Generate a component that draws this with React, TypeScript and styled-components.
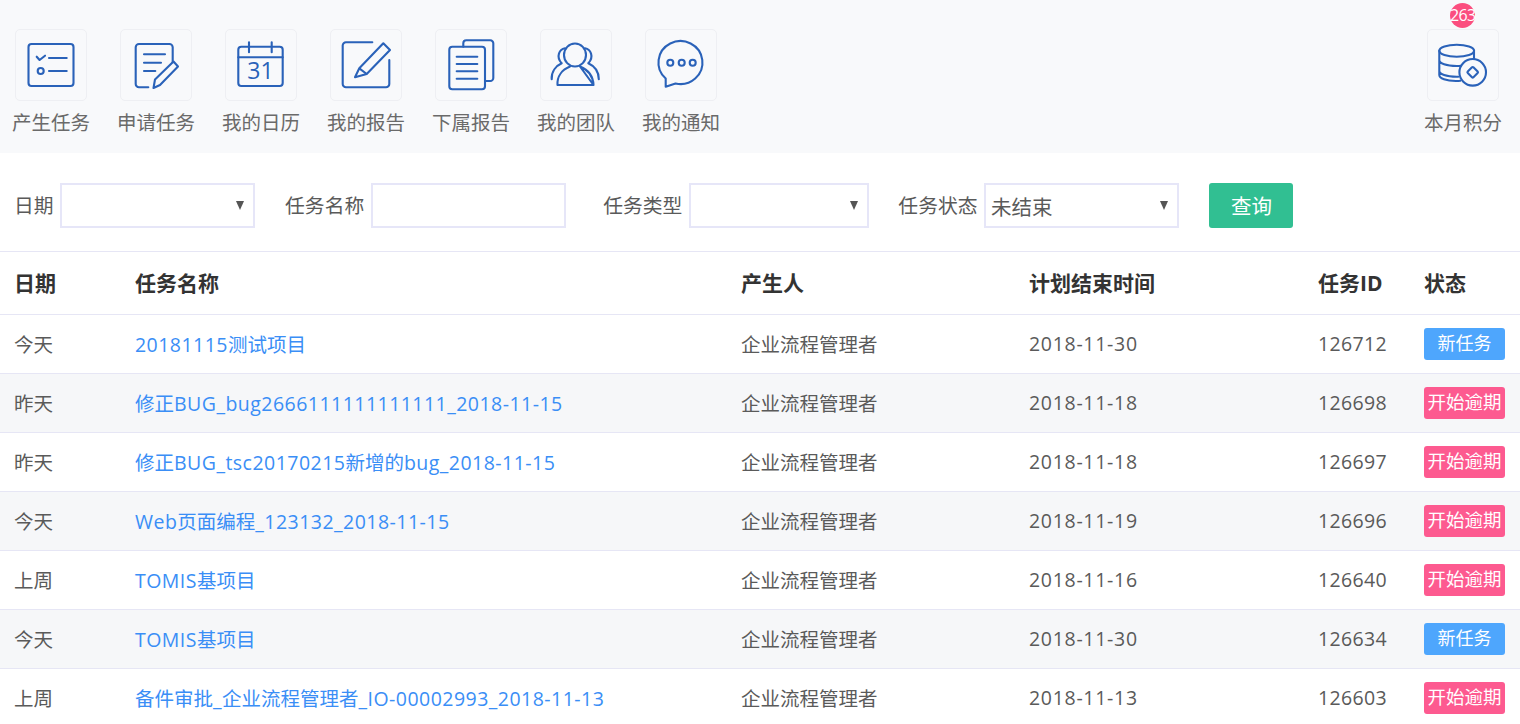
import React from "react";
import styled, { createGlobalStyle } from "styled-components";

const Global = createGlobalStyle`
  html, body { margin: 0; padding: 0; height: 100%; overflow: hidden; background: #fff; }
  body { font-family: "Open Sans", "Noto Sans CJK SC", sans-serif; font-size: 19.5px; color: #555; }
`;

const Page = styled.div`
  width: 1520px;
`;
const TopBar = styled.header`
  display: flex;
  justify-content: space-between;
  height: 153px;
  box-sizing: border-box;
  padding: 29px 18px 0 12px;
  background: #f8f9fb;
`;
const Shortcuts = styled.nav`
  display: flex;
  gap: 27px;
`;
const Shortcut = styled.a`
  position: relative;
  display: flex;
  flex-direction: column;
  align-items: center;
  width: 78px;
`;
const Tile = styled.div`
  width: 72px;
  height: 72px;
  box-sizing: border-box;
  border: 1px solid #eeeff3;
  border-radius: 5px;
  margin-bottom: 7px;
`;
const IconSvg = styled.svg`
  display: block;
  width: 72px;
  height: 72px;
  margin: -1px;
  fill: none;
  stroke: #2a62b9;
  stroke-width: 2.1;
  stroke-linecap: round;
  stroke-linejoin: round;
`;
const CalText = styled.text`
  font-family: "Open Sans", sans-serif;
  font-size: 23px;
  fill: #2a62b9;
  stroke: none;
`;
const TileLabel = styled.span`
  font-size: 19.5px;
  line-height: 30px;
  color: #6a6a6a;
  white-space: nowrap;
`;
const Badge = styled.span`
  position: absolute;
  top: -26px;
  left: 26px;
  width: 25px;
  height: 25px;
  border-radius: 50%;
  background: #fb4e7f;
  color: #fff;
  font-size: 16px;
  letter-spacing: -0.6px;
  line-height: 25px;
  text-align: center;
`;

const Filters = styled.form`
  display: flex;
  align-items: center;
  height: 99px;
  box-sizing: border-box;
  padding: 7.5px 0 0 14px;
  border-bottom: 1.5px solid #e6e6f5;
  margin: 0;
  font-size: 19.8px;
`;
const FilterLabel = styled.label<{ $ml?: number }>`
  margin-left: ${(p) => p.$ml ?? 0}px;
  margin-right: 6.5px;
  padding-bottom: 2px;
  color: #5a5a5a;
  white-space: nowrap;
`;
const SelectWrap = styled.div<{ $w: number }>`
  position: relative;
  width: ${(p) => p.$w}px;
  height: 45px;
  &::after {
    content: "";
    position: absolute;
    right: 11px;
    top: 18px;
    border-left: 4.5px solid transparent;
    border-right: 4.5px solid transparent;
    border-top: 9px solid #555;
    pointer-events: none;
  }
`;
const Select = styled.select`
  appearance: none;
  width: 100%;
  height: 100%;
  box-sizing: border-box;
  border: 2px solid #e6e6f8;
  border-radius: 0;
  background: #fff;
  padding: 2px 0 0 5px;
  font: inherit;
  font-size: 20.5px;
  color: #5a5a5a;
  outline: none;
`;
const TextInput = styled.input`
  width: 195px;
  height: 45px;
  box-sizing: border-box;
  border: 2px solid #e6e6f8;
  background: #fff;
  outline: none;
  font: inherit;
`;
const QueryButton = styled.button`
  width: 84px;
  height: 45px;
  margin-left: 30px;
  padding: 0 0 2px 1px;
  border: 0;
  border-radius: 3px;
  background: #31bf92;
  color: #fff;
  font: inherit;
  font-size: 20.5px;
`;

const Table = styled.table`
  width: 1520px;
  table-layout: fixed;
  border-collapse: collapse;
`;
const Head = styled.th`
  height: 62px;
  padding: 0 0 2px;
  box-sizing: border-box;
  text-align: left;
  font-size: 21px;
  font-weight: 700;
  color: #333;
  border-bottom: 1.5px solid #e6e6f5;
  &:first-child { padding-left: 14px; }
`;
const Row = styled.tr`
  height: 59px;
  border-bottom: 1.5px solid #e6e6f5;
  &:nth-child(even) { background: #f6f7f9; }
`;
const Cell = styled.td<{ $spacing?: number }>`
  padding: 0;
  color: #5a5a5a;
  white-space: nowrap;
  letter-spacing: ${(p) => p.$spacing ?? 0}px;
  &:first-child { padding-left: 14px; }
`;
const TaskLink = styled.a`
  color: #3a8ef6;
  text-decoration: none;
`;
const LatinRun = styled.span`
  letter-spacing: 0.47px;
`;
const Status = styled.span<{ $kind: "new" | "late" }>`
  display: block;
  width: 81px;
  height: 32px;
  border-radius: 3px;
  background: ${(p) => (p.$kind === "new" ? "#4ea6fd" : "#fd5a90")};
  color: #fff;
  font-size: ${(p) => (p.$kind === "new" ? "18px" : "18.5px")};
  line-height: 30px;
  text-align: center;
`;

const icons: React.ReactNode[] = [
  <>
    <rect x="13.5" y="15" width="45" height="42" rx="3" />
    <path d="M21.7 27.7l2.9 3.3 5.4-4.3M34 29h17.7M34 42h17.7" />
    <circle cx="25.7" cy="42" r="3" />
  </>,
  <>
    <path d="M28.3 58.3H19a3.3 3.3 0 0 1-3.3-3.3V18.3A3.3 3.3 0 0 1 19 15h30.4a3.3 3.3 0 0 1 3.3 3.3v15M24 25.3h21M24 33.7h17M24 42h11.3" />
    <path d="M33.5 59l1.5-8.5L53.5 32.5l4.5 5L40 56z" />
  </>,
  <>
    <rect x="13.3" y="17.7" width="44.4" height="39.3" rx="3" />
    <path d="M13.3 28.3h44.4M24 13.3v10M46.7 13.3v10" />
    <CalText x="35.5" y="50" textAnchor="middle">31</CalText>
  </>,
  <>
    <path d="M42.3 13.3H16a3.3 3.3 0 0 0-3.3 3.3V55a3.3 3.3 0 0 0 3.3 3.3h40a3.3 3.3 0 0 0 3.3-3.3V31" />
    <path d="M25 48.3l4.3-9L53.3 14.3 60 21 36.7 45zM29.3 39.3l7.4 5.7" />
  </>,
  <>
    <rect x="14.3" y="17.7" width="35.7" height="42.6" rx="3" />
    <path d="M28.3 17.7v-3.4a3 3 0 0 1 3-3h24a3 3 0 0 1 3 3V49a3 3 0 0 1-3 3H50M21.7 27.7h20.6M21.7 35h20.6M21.7 42.3h20.6M21.7 49.7h20.6" />
  </>,
  <>
    <ellipse cx="35" cy="26" rx="11" ry="11.500" />
    <path d="M17.500 56c-.6-9 5-15.500 12.500-18.500M40 37.500c7.500 3 13.100 9.500 13.500 18.500zM17.500 56H53.500" />
    <path d="M25 19.300c-5.500 1-9.500 8-3.300 15-5.500 2.500-10.500 8-10 16M45 19.300c5.500 1 9.500 8 3.300 15 5.500 2.500 10.500 8 10.500 16" />
  </>,
  <>
    <path d="M30.500 54.500A22 21.500 0 1 0 20.700 49.500v8.200z" />
    <circle cx="25.300" cy="33.700" r="3" />
    <circle cx="36.700" cy="33.700" r="3" />
    <circle cx="47.700" cy="33.700" r="3" />
  </>,
];

const PointsIcon = () => (
  <IconSvg viewBox="0 0 72 72">
    <ellipse cx="29.700" cy="21.700" rx="17.400" ry="6" />
    <path d="M12.300 21.700V46c0 3.500 7 6 16.500 6 1.500 0 3 0 4.500-.2M47 21.700V30M12.300 31c0 3.500 7 6 17.400 6 1.500 0 2.800 0 4-.2M12.300 41.700c0 3.500 7 6 17.400 6h1.500" />
    <circle cx="45.700" cy="43.300" r="13.300" />
    <rect x="41.700" y="39.300" width="8" height="8" rx="1" transform="rotate(45 45.700 43.300)" />
  </IconSvg>
);

const shortcuts = ["产生任务", "申请任务", "我的日历", "我的报告", "下属报告", "我的团队", "我的通知"];

const widths = [135, 606, 288, 289, 106, 96];
const heads = ["日期", "任务名称", "产生人", "计划结束时间", "任务ID", "状态"];

type Task = { day: string; name: string; end: string; id: string; kind: "new" | "late" };
const tasks: Task[] = [
  { day: "今天", name: "20181115测试项目", end: "2018-11-30", id: "126712", kind: "new" },
  { day: "昨天", name: "修正BUG_bug2666111111111111_2018-11-15", end: "2018-11-18", id: "126698", kind: "late" },
  { day: "昨天", name: "修正BUG_tsc20170215新增的bug_2018-11-15", end: "2018-11-18", id: "126697", kind: "late" },
  { day: "今天", name: "Web页面编程_123132_2018-11-15", end: "2018-11-19", id: "126696", kind: "late" },
  { day: "上周", name: "TOMIS基项目", end: "2018-11-16", id: "126640", kind: "late" },
  { day: "今天", name: "TOMIS基项目", end: "2018-11-30", id: "126634", kind: "new" },
  { day: "上周", name: "备件审批_企业流程管理者_IO-00002993_2018-11-13", end: "2018-11-13", id: "126603", kind: "late" },
];

// Latin runs are set a little wider than the CJK runs beside them.
const splitRuns = (text: string) =>
  text.split(/([\x00-\x7f]+)/).map((part, i) => (i % 2 ? <LatinRun key={i}>{part}</LatinRun> : part));

export default function App() {
  return (
    <Page>
      <Global />
      <TopBar>
        <Shortcuts>
          {shortcuts.map((label, i) => (
            <Shortcut key={label}>
              <Tile>
                <IconSvg viewBox="0 0 72 72">{icons[i]}</IconSvg>
              </Tile>
              <TileLabel>{label}</TileLabel>
            </Shortcut>
          ))}
        </Shortcuts>
        <Shortcut>
          <Badge>263</Badge>
          <Tile>
            <PointsIcon />
          </Tile>
          <TileLabel>本月积分</TileLabel>
        </Shortcut>
      </TopBar>
      <Filters>
        <FilterLabel>日期</FilterLabel>
        <SelectWrap $w={195}>
          <Select defaultValue="" />
        </SelectWrap>
        <FilterLabel $ml={30}>任务名称</FilterLabel>
        <TextInput />
        <FilterLabel $ml={37.5}>任务类型</FilterLabel>
        <SelectWrap $w={180}>
          <Select defaultValue="" />
        </SelectWrap>
        <FilterLabel $ml={29.5}>任务状态</FilterLabel>
        <SelectWrap $w={195}>
          <Select defaultValue="未结束">
            <option>未结束</option>
          </Select>
        </SelectWrap>
        <QueryButton type="button">查询</QueryButton>
      </Filters>
      <Table>
        <colgroup>
          {widths.map((w, i) => (
            <col key={i} width={w} />
          ))}
        </colgroup>
        <thead>
          <tr>
            {heads.map((h) => (
              <Head key={h}>{h}</Head>
            ))}
          </tr>
        </thead>
        <tbody>
          {tasks.map((t) => (
            <Row key={t.id}>
              <Cell>{t.day}</Cell>
              <Cell>
                <TaskLink>{splitRuns(t.name)}</TaskLink>
              </Cell>
              <Cell>企业流程管理者</Cell>
              <Cell $spacing={0.7}>{t.end}</Cell>
              <Cell $spacing={0.35}>{t.id}</Cell>
              <Cell>
                <Status $kind={t.kind}>{t.kind === "new" ? "新任务" : "开始逾期"}</Status>
              </Cell>
            </Row>
          ))}
        </tbody>
      </Table>
    </Page>
  );
}
